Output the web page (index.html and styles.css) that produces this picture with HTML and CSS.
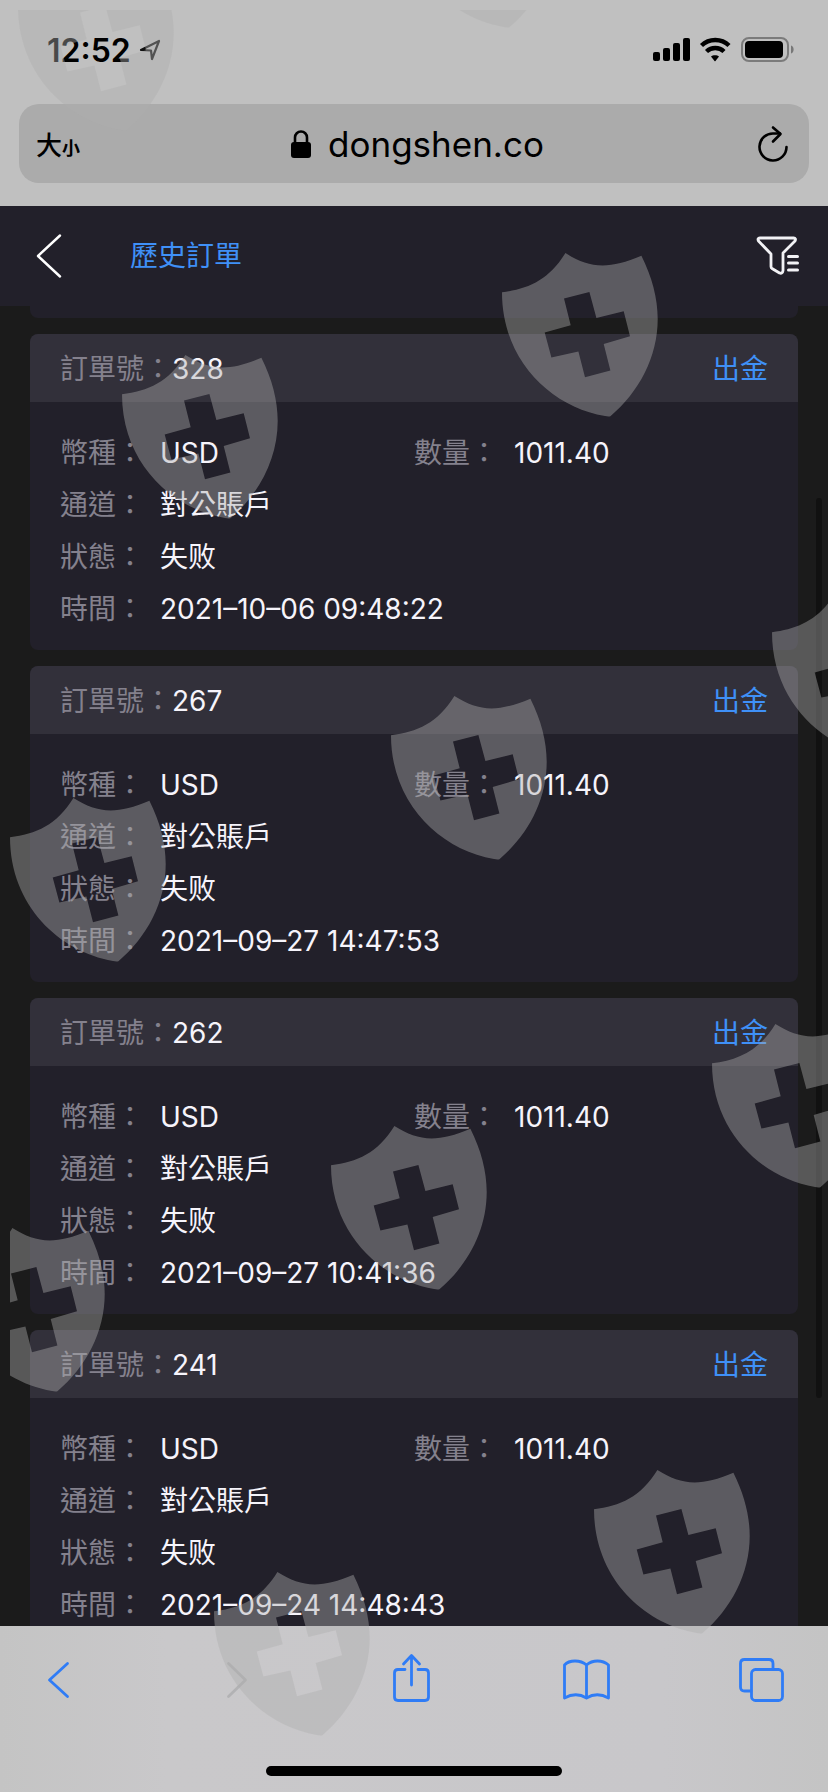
FILE: index.html
```html
<!DOCTYPE html>
<html lang="zh-Hant">
<head>
<meta charset="utf-8">
<meta name="viewport" content="width=device-width, initial-scale=1">
<title>歷史訂單</title>
<link rel="stylesheet" href="styles.css">
</head>
<body>
<div class="screen">
  <div class="chrome">
    <div class="status">
      <div class="status-time">
        <span>12:52</span>
        <svg width="22" height="22" viewBox="0 0 22 22" aria-hidden="true"><path d="M2 11 20 2 13 20 12 11.500Z" fill="none" stroke="#111" stroke-width="2.200" stroke-linejoin="round"/></svg>
      </div>
      <svg width="142" height="26" viewBox="0 0 142 26" aria-hidden="true">
        <g fill="#000">
          <rect x="0" y="15" width="7" height="9" rx="2"/>
          <rect x="10" y="11" width="7" height="13" rx="2"/>
          <rect x="20" y="6" width="7" height="18" rx="2"/>
          <rect x="30" y="1" width="7" height="23" rx="2"/>
          <path d="M58 19.500c1.700-1.600 6.300-1.600 8 0L62.500 24q-.5.500-1 0Z"/>
          <rect x="92" y="4" width="38" height="17" rx="4"/>
        </g>
        <path d="M48.500 8.500c7.500-7.300 20-7.300 27.500 0M53.500 14.500c4.800-4.600 12.700-4.600 17.500 0" fill="none" stroke="#000" stroke-width="4.400"/>
        <rect x="89" y="1" width="46" height="23" rx="7" fill="none" stroke="#7b7b7b" stroke-width="2"/>
        <path d="M138 8.500c3.500 1 3.500 7 0 8Z" fill="#777"/>
      </svg>
    </div>
    <div class="address">
      <button class="text-size" type="button">大<small>小</small></button>
      <div class="host">
        <svg width="20" height="30" viewBox="0 0 20 30" aria-hidden="true"><rect x="0" y="13" width="20" height="16" rx="3"/><path d="M4 15V8.500a6 6 0 0 1 12 0V15" fill="none" stroke="#000" stroke-width="2.600"/></svg>
        <span>dongshen.co</span>
      </div>
      <button class="reload" type="button" aria-label="重新載入">
        <svg width="32" height="38" viewBox="0 0 32 38" fill="none" stroke="#000" stroke-width="2.600" stroke-linecap="round" stroke-linejoin="round"><path d="M29.500 22A13.500 13.500 0 1 1 17 8.500H23"/><path d="M16 2.500 23.500 9 16 16.500"/></svg>
      </button>
    </div>
  </div>

  <header class="page-head">
    <button class="back" type="button" aria-label="返回">
      <svg width="26" height="44" viewBox="0 0 26 44"><path d="M24 1.500 2 22 24 42.500" fill="none" stroke="#fff" stroke-width="2.400" stroke-linecap="round" stroke-linejoin="round"/></svg>
    </button>
    <h1>歷史訂單</h1>
    <button class="filter" type="button" aria-label="篩選">
      <svg width="44" height="40" viewBox="0 0 44 40" fill="none" stroke="#f2f2f5" stroke-linecap="round" stroke-linejoin="round"><path d="M4 2H37.500Q40.500 2.500 39 5L27 17V34.500Q26.500 38 23.500 37L16 32.500Q15 32 15 30.500V18L2.500 5Q1 2.500 4 2Z" stroke-width="2.800"/><path d="M32.500 20.500H41.500M32.500 27H41.500M32.500 34H41.500" stroke-width="3"/></svg>
    </button>
  </header>

  <main class="orders">
    <div class="card card-tail"></div>

    <article class="card">
      <div class="card-head"><span><span class="label">訂單號：</span>328</span><a href="#withdraw">出金</a></div>
      <dl class="fields">
        <div><dt>幣種：</dt><dd>USD</dd></div><div><dt>數量：</dt><dd>1011.40</dd></div>
        <div class="wide"><dt>通道：</dt><dd>對公賬戶</dd></div>
        <div class="wide"><dt>狀態：</dt><dd lang="zh-Hans">失败</dd></div>
        <div class="wide"><dt>時間：</dt><dd>2021–10–06 09:48:22</dd></div>
      </dl>
    </article>

    <article class="card">
      <div class="card-head"><span><span class="label">訂單號：</span>267</span><a href="#withdraw">出金</a></div>
      <dl class="fields">
        <div><dt>幣種：</dt><dd>USD</dd></div><div><dt>數量：</dt><dd>1011.40</dd></div>
        <div class="wide"><dt>通道：</dt><dd>對公賬戶</dd></div>
        <div class="wide"><dt>狀態：</dt><dd lang="zh-Hans">失败</dd></div>
        <div class="wide"><dt>時間：</dt><dd>2021–09–27 14:47:53</dd></div>
      </dl>
    </article>

    <article class="card">
      <div class="card-head"><span><span class="label">訂單號：</span>262</span><a href="#withdraw">出金</a></div>
      <dl class="fields">
        <div><dt>幣種：</dt><dd>USD</dd></div><div><dt>數量：</dt><dd>1011.40</dd></div>
        <div class="wide"><dt>通道：</dt><dd>對公賬戶</dd></div>
        <div class="wide"><dt>狀態：</dt><dd lang="zh-Hans">失败</dd></div>
        <div class="wide"><dt>時間：</dt><dd>2021–09–27 10:41:36</dd></div>
      </dl>
    </article>

    <article class="card">
      <div class="card-head"><span><span class="label">訂單號：</span>241</span><a href="#withdraw">出金</a></div>
      <dl class="fields">
        <div><dt>幣種：</dt><dd>USD</dd></div><div><dt>數量：</dt><dd>1011.40</dd></div>
        <div class="wide"><dt>通道：</dt><dd>對公賬戶</dd></div>
        <div class="wide"><dt>狀態：</dt><dd lang="zh-Hans">失败</dd></div>
        <div class="wide"><dt>時間：</dt><dd>2021–09–24 14:48:43</dd></div>
      </dl>
    </article>
    <div class="scrollbar"></div>
  </main>

  <nav class="toolbar">
    <div class="tools">
      <button type="button" aria-label="上一頁"><svg viewBox="0 0 52 56"><path d="M35.500 11.500 17.500 28 35.500 44.500"/></svg></button>
      <button type="button" aria-label="下一頁" disabled><svg viewBox="0 0 52 56"><path d="M20.500 11.500 37.500 28 20.500 44.500"/></svg></button>
      <button type="button" aria-label="分享"><svg viewBox="0 0 52 56"><path d="M21 17.500H14Q10.500 17.500 10.500 21V45Q10.500 48.500 14 48.500H41Q44.500 48.500 44.500 45V21Q44.500 17.500 41 17.500H34M27.500 33V4M19.500 12 27.500 3.500 35.500 12"/></svg></button>
      <button type="button" aria-label="書籤"><svg viewBox="0 0 52 56"><path d="M27.500 13V46Q17 39.500 5.500 46V13Q9 9 16 9T27.500 13Q32 9 38.500 9T49.500 13V46Q38 39.500 27.500 46"/></svg></button>
      <button type="button" aria-label="分頁"><svg viewBox="0 0 52 56"><rect x="16.500" y="17.500" width="31" height="31" rx="4"/><path d="M16 39H9.500Q5.500 39 5.500 35V11.500Q5.500 7.500 9.500 7.500H34Q38 7.500 38 11.500V17"/></svg></button>
    </div>
    <div class="home"></div>
  </nav>

  <svg class="marks" aria-hidden="true">
    <defs>
      <path id="shield" fill-rule="evenodd" d="M0 39.300C26 36 47 27 63.400 0C87 15 106 17 139.400 2.700C150 24 155.700 45 155.700 66C155.700 104 137 139 108.400 163.300Q106 163.800 103 163C50 154 0 108 0 39.300ZM62 45.600 68.700 72.300 42.700 79.600 49.400 104.600 76.400 98.600 83 124.300 108.400 117.600 101.700 91 128 83.300 121.700 58.300 94.400 65 87.400 39Z"/>
    </defs>
    <!-- Repeating watermark, offset by the 10px margin of the layer -->
    <g fill="#afafaf" fill-opacity=".42" transform="translate(-10 -10)">
      <use href="#shield" x="18" y="-33"/>
      <use href="#shield" x="401" y="-136"/>
      <use href="#shield" x="502" y="253"/>
      <use href="#shield" x="122" y="355"/>
      <use href="#shield" x="772" y="593"/>
      <use href="#shield" x="391" y="696"/>
      <use href="#shield" x="10" y="798"/>
      <use href="#shield" x="712" y="1024"/>
      <use href="#shield" x="331" y="1126"/>
      <use href="#shield" x="-51" y="1228"/>
      <use href="#shield" x="594" y="1470"/>
      <use href="#shield" x="214" y="1572"/>
    </g>
  </svg>
</div>
</body>
</html>
```
FILE: styles.css
```css
* { box-sizing: border-box; }

body {
  margin: 0;
  background: #1b1b1b;
  color: #f6f4fb;
  font-family: Inter, "Noto Sans CJK TC", sans-serif;
  font-size: 28px;
}

button {
  display: flex;
  align-items: center;
  justify-content: center;
  padding: 0;
  border: 0;
  background: none;
  color: inherit;
  font: inherit;
}

svg { display: block; }

.screen {
  position: relative;
  display: flex;
  flex-direction: column;
  height: 100vh;
  overflow: hidden;
}

/* Browser chrome */
.chrome {
  flex: none;
  padding-bottom: 23px;
  background: #c0c0c0;
  color: #000;
}

.status {
  display: flex;
  align-items: center;
  justify-content: space-between;
  height: 104px;
  padding: 0 33px 4px 47px;
}

.status-time {
  display: flex;
  align-items: center;
  gap: 8px;
  font-size: 32px;
  font-weight: 600;
}

.address {
  display: grid;
  grid-template-columns: 1fr auto 1fr;
  align-items: center;
  height: 79px;
  margin: 0 19px;
  padding: 0 20px 0 17px;
  border-radius: 20px;
  background: #ababab;
}

.text-size {
  justify-self: start;
  align-items: baseline;
  font-size: 26px;
  font-weight: 500;
}

.text-size small {
  font-size: 18px;
  font-weight: 700;
}

.host {
  display: flex;
  align-items: center;
  gap: 17px;
  padding-left: 10px;
  font-size: 35px;
}

.reload { justify-self: end; }

/* Page header */
.page-head {
  display: flex;
  flex: none;
  align-items: center;
  height: 100px;
  padding: 0 28px 0 36px;
  background: #22202a;
}

.page-head h1 {
  flex: 1;
  margin: 0 0 0 68px;
  padding-bottom: 4px;
  color: #3f90f7;
  font-size: 28px;
  font-weight: 400;
}

/* Orders */
.orders {
  position: relative;
  display: flex;
  flex: 1;
  flex-direction: column;
  gap: 16px;
  min-height: 0;
  padding: 0 30px;
  overflow: hidden;
}

.card {
  flex: none;
  overflow: hidden;
  border-radius: 8px;
  background: #22202a;
}

.card-tail {
  height: 12px;
  border-radius: 0 0 8px 8px;
}

.card-head {
  display: flex;
  align-items: center;
  justify-content: space-between;
  height: 68px;
  padding: 0 30px 2px;
  background: #32303a;
}

.card-head a {
  color: #3f90f7;
  text-decoration: none;
}

.label, dt { color: #84818d; }

.fields {
  display: grid;
  grid-template-columns: 1fr 1fr;
  margin: 0;
  padding: 25px 30px 15px;
  line-height: 52px;
}

.fields > div {
  display: flex;
  gap: 16px;
  height: 52px;
}

.fields .wide { grid-column: 1 / -1; }

dd { margin: 0; }

[lang="zh-Hans"] { font-family: Inter, "Noto Sans CJK SC", sans-serif; }

.scrollbar {
  position: absolute;
  top: 192px;
  right: 6px;
  width: 6px;
  height: 900px;
  border-radius: 3px;
  background: #111;
}

/* Bottom toolbar */
.toolbar {
  display: flex;
  flex: none;
  flex-direction: column;
  align-items: center;
  justify-content: space-between;
  height: 166px;
  padding: 26px 0 16px;
  background: linear-gradient(90deg, #c4c4c4, #c9c8ca 20%, #c8c7ca 80%, #c4c4c4);
}

.tools {
  display: flex;
  justify-content: space-between;
  width: 100%;
  padding: 0 41px 0 32px;
}

.tools svg {
  width: 52px;
  height: 56px;
  fill: none;
  stroke: #2f7cf6;
  stroke-width: 2.8;
  stroke-linecap: round;
  stroke-linejoin: round;
}

.tools button:disabled svg { stroke: #b2b2b4; }

.home {
  width: 296px;
  height: 10px;
  border-radius: 5px;
  background: #000;
}

/* Watermark layer */
.marks {
  position: absolute;
  top: 10px;
  left: 10px;
  width: calc(100% - 10px);
  height: calc(100% - 10px);
  pointer-events: none;
}
```
